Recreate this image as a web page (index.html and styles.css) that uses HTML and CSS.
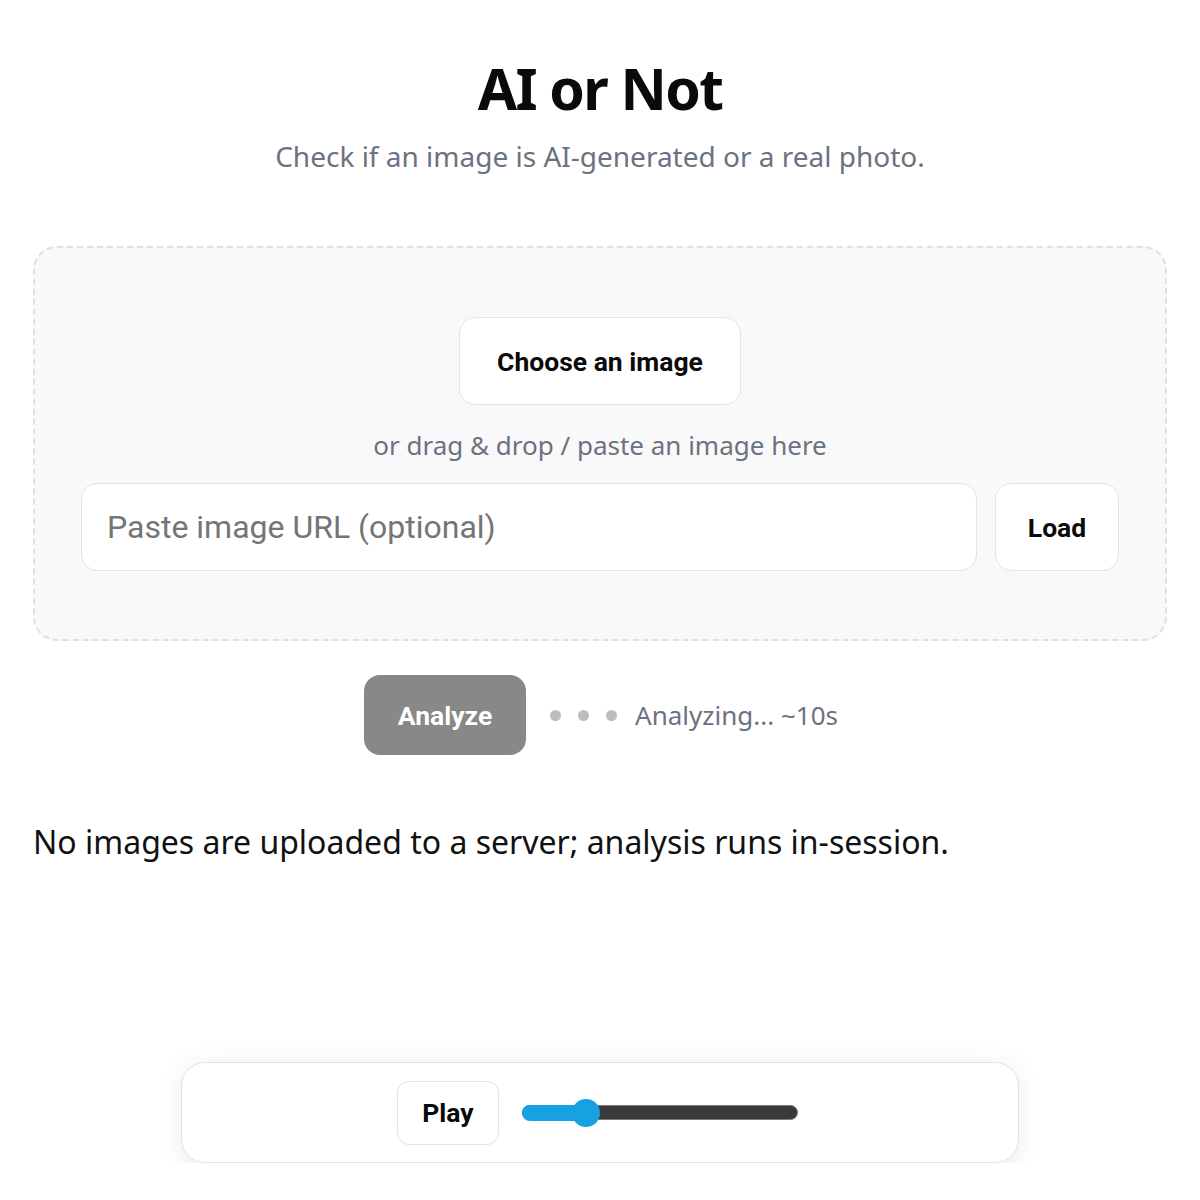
FILE: index.html
```html
<!DOCTYPE html>
<html lang="en">
<head>
<meta charset="utf-8">
<title>AI or Not</title>
<link rel="stylesheet" href="styles.css">
</head>
<body>
<main class="page">
  <header class="hero">
    <h1 class="title">AI or Not</h1>
    <p class="subtitle">Check if an image is AI-generated or a real photo.</p>
  </header>

  <section class="dropzone">
    <button class="btn btn-choose" type="button">Choose an image</button>
    <p class="drop-hint">or drag &amp; drop / paste an image here</p>
    <div class="url-row">
      <input class="url-input" type="text" placeholder="Paste image URL (optional)">
      <button class="btn btn-load" type="button">Load</button>
    </div>
  </section>

  <div class="actions">
    <button class="btn-analyze" type="button">Analyze</button>
    <div class="status">
      <span class="dot"></span><span class="dot"></span><span class="dot"></span>
      <span class="status-text">Analyzing... ~10s</span>
    </div>
  </div>

  <p class="note">No images are uploaded to a server; analysis runs in-session.</p>

  <div class="player">
    <button class="btn btn-play" type="button">Play</button>
    <div class="slider">
      <div class="slider-fill" style="width: 63px"></div>
      <div class="slider-thumb" style="left: 63px"></div>
    </div>
  </div>
</main>
</body>
</html>
```

FILE: styles.css
```css
* { box-sizing: border-box; }

html, body {
  margin: 0;
  padding: 0;
  background: #ffffff;
}

body {
  font-family: "Noto Sans", "Open Sans", sans-serif;
  color: #111111;
}

.page {
  width: 1134px;
  margin: 0 auto;
  padding-top: 55px;
  display: flex;
  flex-direction: column;
}

.hero {
  text-align: center;
}

.title {
  margin: 0;
  font-size: 57px;
  font-weight: 700;
  line-height: 66px;
  color: #0a0a0a;
  letter-spacing: -1.6px;
}

.subtitle {
  margin: 17px 0 0;
  font-size: 28px;
  line-height: 36px;
  color: #6b7280;
}

.dropzone {
  margin-top: 72px;
  border: 2px dashed #e0e0e0;
  border-radius: 24px;
  background: #f9f9f9;
  padding: 69px 46px 68px;
  display: flex;
  flex-direction: column;
  align-items: center;
}

.btn {
  font-family: Roboto, "Liberation Sans", sans-serif;
  font-weight: 700;
  color: #0a0a0a;
  background: #ffffff;
  border: 1.5px solid #e3e3e3;
  border-radius: 16px;
  cursor: pointer;
}

.btn-choose {
  width: 282px;
  height: 88px;
  font-size: 26.5px;
}

.drop-hint {
  margin: 22px 0 0;
  font-size: 26px;
  line-height: 36px;
  color: #6b7280;
}

.url-row {
  margin-top: 20px;
  width: 100%;
  display: flex;
  gap: 18px;
}

.url-input {
  flex: 1;
  min-width: 0;
  height: 88px;
  border: 1.5px solid #e3e3e3;
  border-radius: 16px;
  background: #ffffff;
  padding: 0 25px;
  font-family: Roboto, "Liberation Sans", sans-serif;
  font-size: 32px;
  color: #111;
  outline: none;
}

.url-input::placeholder {
  color: #757575;
}

.btn-load {
  width: 124px;
  height: 88px;
  font-size: 26.5px;
}

.actions {
  margin-top: 34px;
  display: flex;
  align-items: center;
  justify-content: center;
  gap: 24px;
  padding-left: 2px;
}

.btn-analyze {
  width: 162px;
  height: 80px;
  border: none;
  border-radius: 16px;
  background: #888888;
  color: #ffffff;
  font-family: Roboto, "Liberation Sans", sans-serif;
  font-weight: 700;
  font-size: 26.5px;
}

.status {
  display: flex;
  align-items: center;
  gap: 17px;
}

.dot {
  width: 11px;
  height: 11px;
  border-radius: 50%;
  background: #bdbdbd;
}

.status-text {
  margin-left: 1px;
  font-size: 26px;
  line-height: 34px;
  color: #6b7280;
}

.note {
  margin: 65px 0 0;
  font-size: 32px;
  line-height: 44px;
  color: #111111;
}

.player {
  align-self: center;
  margin-top: 198px;
  width: 838px;
  height: 101px;
  border: 1.5px solid #e3e3e3;
  border-radius: 24px;
  background: #ffffff;
  box-shadow: 0 4px 28px rgba(0, 0, 0, 0.08);
  display: flex;
  align-items: center;
  justify-content: center;
  gap: 23px;
  padding-right: 5px;
}

.btn-play {
  width: 102px;
  height: 64px;
  font-size: 26.5px;
  border-radius: 12px;
}

.slider {
  position: relative;
  width: 276px;
  height: 15px;
  border-radius: 8px;
  background: #3a3a3a;
  border: 1.5px solid #7a7a7a;
}

.slider-fill {
  position: absolute;
  left: -1.5px;
  top: -1.5px;
  bottom: -1.5px;
  border-radius: 8px 0 0 8px;
  background: #16a1e3;
}

.slider-thumb {
  position: absolute;
  top: 50%;
  width: 28px;
  height: 28px;
  margin-left: -14px;
  margin-top: -14px;
  border-radius: 50%;
  background: #16a1e3;
}
```
